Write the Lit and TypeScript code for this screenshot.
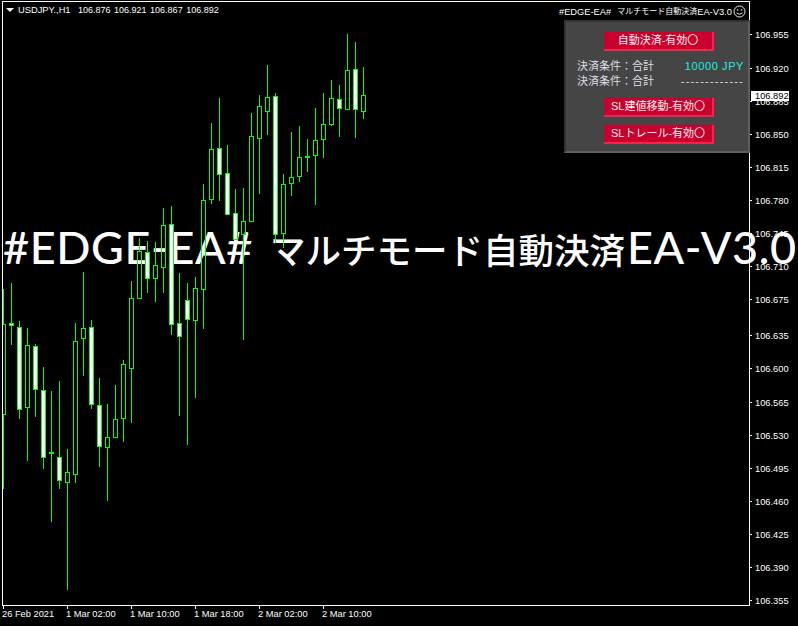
import { LitElement, html, css, svg } from "lit";
import { customElement } from "lit/decorators.js";

// x, wickTop, wickBottom, bodyTop, bodyBottom, kind (0 hollow, 1 white, 2 doji)
type C = [number, number, number, number, number, number];
const candles: C[] = [
  [3, 289, 489, 324, 414, 0],
  [11, 283, 345, 323, 325, 1],
  [19, 321, 419, 327, 409, 1],
  [27, 328, 461, 345, 407, 0],
  [35, 344, 417, 346, 389, 1],
  [43, 367, 469, 390, 457, 1],
  [51, 391, 522, 452, 453, 2],
  [59, 381, 489, 457, 480, 1],
  [67, 449, 590, 472, 482, 0],
  [75, 323, 483, 341, 474, 0],
  [83, 272, 376, 328, 338, 0],
  [91, 320, 409, 327, 404, 1],
  [99, 378, 467, 405, 446, 1],
  [107, 404, 501, 437, 447, 0],
  [115, 385, 438, 419, 437, 0],
  [123, 360, 442, 364, 418, 0],
  [131, 281, 423, 298, 368, 0],
  [139, 238, 299, 251, 298, 0],
  [147, 241, 293, 252, 278, 1],
  [155, 242, 302, 265, 278, 0],
  [163, 208, 293, 225, 267, 0],
  [171, 206, 335, 224, 324, 1],
  [179, 273, 416, 323, 336, 1],
  [187, 283, 445, 300, 319, 1],
  [195, 277, 398, 288, 320, 0],
  [203, 184, 329, 200, 289, 0],
  [211, 123, 204, 149, 199, 0],
  [219, 98, 201, 148, 174, 1],
  [227, 145, 214, 173, 214, 1],
  [235, 189, 240, 213, 239, 1],
  [243, 188, 340, 221, 234, 0],
  [251, 113, 221, 136, 221, 0],
  [259, 95, 194, 106, 138, 0],
  [267, 65, 135, 97, 111, 0],
  [275, 93, 243, 96, 234, 1],
  [283, 174, 248, 184, 233, 0],
  [291, 132, 196, 177, 183, 0],
  [299, 126, 182, 157, 176, 0],
  [307, 139, 172, 156, 157, 2],
  [315, 108, 205, 140, 155, 0],
  [323, 93, 158, 124, 139, 0],
  [331, 80, 126, 98, 124, 0],
  [339, 85, 137, 99, 108, 1],
  [347, 34, 110, 70, 109, 0],
  [355, 42, 138, 69, 109, 1],
  [363, 67, 119, 95, 111, 0],
];

const prices: [string, number][] = [
  ["106.955", 34], ["106.920", 68], ["106.885", 101], ["106.850", 134],
  ["106.815", 167], ["106.780", 200], ["106.745", 233], ["106.710", 266],
  ["106.675", 299], ["106.635", 335], ["106.600", 368], ["106.565", 402],
  ["106.530", 435], ["106.495", 468], ["106.460", 501], ["106.425", 534],
  ["106.390", 567], ["106.355", 600],
];
const times: [string, number][] = [
  ["26 Feb 2021", 3], ["1 Mar 02:00", 67], ["1 Mar 10:00", 131],
  ["1 Mar 18:00", 195], ["2 Mar 02:00", 259], ["2 Mar 10:00", 323],
];

const candle = ([x, wt, wb, bt, bb, k]: C) => {
  const l = Math.max(x - 2, 3);
  const w = x + 3 - l;
  if (k === 2) {
    return svg`<rect x="${x}" y="${wt}" width="1" height="${wb - wt}" fill="#0f0"></rect>
      <rect x="${l}" y="${bt}" width="${w}" height="2" fill="#0f0"></rect>`;
  }
  const h = bb - bt + 1;
  return svg`
    <rect x="${x}" y="${wt}" width="1" height="${bt - wt}" fill="#0f0"></rect>
    <rect x="${x}" y="${bb}" width="1" height="${wb - bb}" fill="#0f0"></rect>
    ${k === 1
      ? svg`<rect x="${l}" y="${bt}" width="${w}" height="${h}" fill="#0f0"></rect>
            <rect x="${l + 1}" y="${bt + 1}" width="${w - 2}" height="${h - 2}" fill="#fff"></rect>`
      : svg`<rect x="${l}" y="${bt}" width="${w}" height="1" fill="#0f0"></rect>
            <rect x="${l}" y="${bb}" width="${w}" height="1" fill="#0f0"></rect>
            ${x - 2 >= 3 ? svg`<rect x="${l}" y="${bt}" width="1" height="${h}" fill="#0f0"></rect>` : ""}
            <rect x="${x + 2}" y="${bt}" width="1" height="${h}" fill="#0f0"></rect>`}
  `;
};

@customElement("app-root")
export class AppRoot extends LitElement {
  static styles = css`
    :host { display: block; width: 798px; height: 626px; background: #000; overflow: hidden;
      position: relative; font-family: "Liberation Sans", "Noto Sans CJK JP", sans-serif; color: #fff; }
    .big { position: absolute; left: 3px; top: 217px; white-space: nowrap; color: #fff; line-height: 60px; }
    .big .la { font: 500 45px/60px "Lato", sans-serif; letter-spacing: .6px; }
    .big .ja { font: 500 35.5px/60px "Noto Sans CJK JP", sans-serif; margin: 0 2px 0 17px; }
    svg.chart { position: absolute; inset: 0; width: 798px; height: 626px; shape-rendering: crispEdges; }
    .lbl { position: absolute; font-size: 9.3px; line-height: 12px; white-space: nowrap; color: #fff; }
    .legend { position: absolute; left: 18px; top: 4px; font-size: 9.3px; line-height: 12px; white-space: pre; }
    .legend .nums { font-size: 9px; word-spacing: 1px; margin-left: 4px; }
    .arrow { position: absolute; left: 6px; top: 8px; width: 0; height: 0;
      border-left: 4px solid transparent; border-right: 4px solid transparent; border-top: 4px solid #fff; }
    .ea { position: absolute; left: 559px; top: 5px; width: 187px; display: flex; align-items: center;
      font-size: 9.3px; line-height: 12px; white-space: nowrap; }
    .ea .ja { font-size: 8px; margin-left: 6px; }
    .ea svg { width: 13px; height: 13px; margin-left: 1px; }
    .tag { position: absolute; left: 751px; top: 91px; width: 38px; height: 10px; background: #fff; color: #000;
      font-size: 9.3px; line-height: 10px; padding-left: 4px; box-sizing: border-box; }
    .panel { position: absolute; left: 564px; top: 20px; width: 186px; height: 133px; box-sizing: border-box;
      background: #454545; border: 2px solid #5f5f5f; border-left-color: #333; border-top-color: #333;
      display: flex; flex-direction: column; align-items: center; padding: 10px 0 0 4px; }
    .btn { width: 110px; height: 19px; box-sizing: border-box; background: #c8002d; color: #f4f0f0; text-align: center;
      border: 2px solid #ff1f4d; border-left: 0; border-top: 0; font-size: 11px; line-height: 17px; white-space: nowrap; }
    .rows { align-self: stretch; margin: 8px 0 9px; padding: 0 4px 0 7px; color: #dcdce4; font-size: 11px; line-height: 15px; }
    .row { display: flex; justify-content: space-between; }
    .v { color: #19f0e0; letter-spacing: .6px; }
    .d { letter-spacing: 1.2px; }
    .btn + .btn { margin-top: 8px; }
  `;

  render() {
    return html`
      ${prices.map(([p, y]) => html`<div class="lbl" style="left:755px;top:${y - 5}px">${p}</div>`)}
      ${times.map(([t, x]) => html`<div class="lbl" style="left:${x - 1}px;top:608px">${t}</div>`)}
      <div class="tag">106.892</div>
      <div class="big"><span class="la">#EDGE-EA#</span><span class="ja">マルチモード自動決済</span><span class="la">EA-V3.0</span></div>
      <svg class="chart" viewBox="0 0 798 626">
        <rect x="2" y="1" width="748" height="1" fill="#fff"></rect>
        <rect x="2" y="1" width="1" height="605" fill="#fff"></rect>
        <rect x="749" y="1" width="1" height="605" fill="#fff"></rect>
        <rect x="2" y="605" width="748" height="1" fill="#fff"></rect>
        ${prices.map(([, y]) => svg`<rect x="750" y="${y}" width="2" height="1" fill="#fff"></rect>`)}
        ${times.map(([, x]) => svg`<rect x="${x}" y="606" width="1" height="3" fill="#fff"></rect>`)}
        ${candles.map(candle)}
      </svg>
      <div class="arrow"></div>
      <div class="legend">USDJPY.,H1<span class="nums"> 106.876 106.921 106.867 106.892</span></div>
      <div class="ea">#EDGE-EA#<span class="ja">マルチモード自動決済</span>EA-V3.0
        <svg viewBox="0 0 13 13" fill="none" stroke="#f0e8e0" stroke-width="1">
          <circle cx="6.5" cy="6.5" r="5.5"></circle>
          <circle cx="4.5" cy="5" r=".8" fill="#f0e8e0" stroke="none"></circle>
          <circle cx="8.5" cy="5" r=".8" fill="#f0e8e0" stroke="none"></circle>
          <path d="M3.5 8 Q6.5 10.5 9.5 8"></path>
        </svg>
      </div>
      <div class="panel">
        <div class="btn">自動決済-有効〇</div>
        <div class="rows">
          <div class="row"><span>決済条件：合計</span><span class="v">10000 JPY</span></div>
          <div class="row"><span>決済条件：合計</span><span class="d">-------------</span></div>
        </div>
        <div class="btn">SL建値移動-有効〇</div>
        <div class="btn">SLトレール-有効〇</div>
      </div>
    `;
  }
}
